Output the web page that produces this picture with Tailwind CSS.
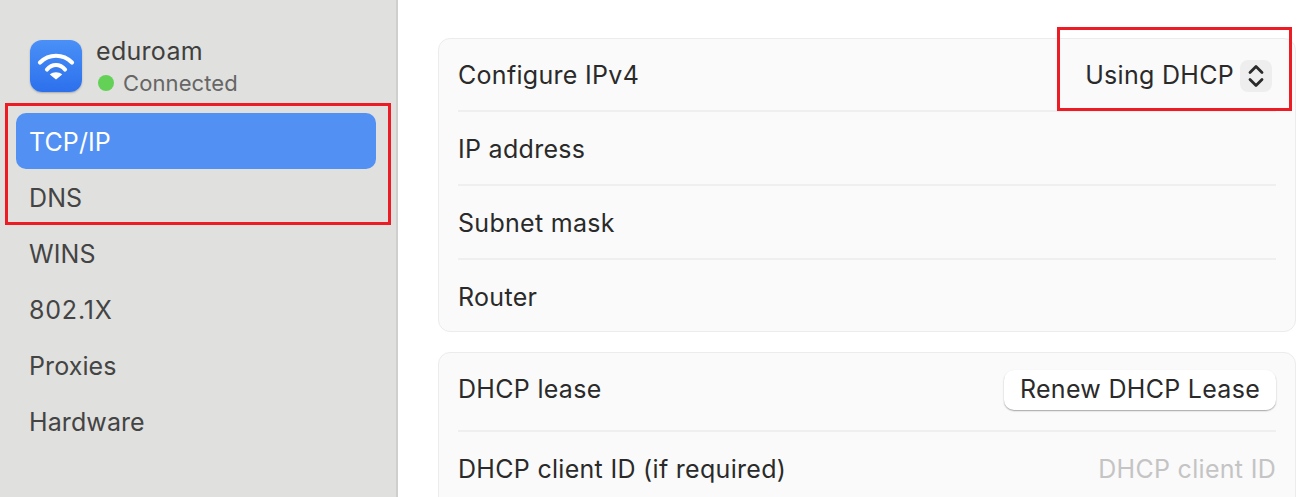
<!DOCTYPE html>
<html lang="en">
<head>
    <meta charset="UTF-8">
    <title>eduroam TCP/IP</title>
    <script src="https://cdn.jsdelivr.net/npm/@tailwindcss/browser@4"></script>
</head>
<body class="relative h-[497px] w-[1312px] overflow-hidden bg-white font-['Inter','Liberation_Sans',sans-serif] text-[25px] tracking-[0.3px] text-[#2a2a2a]">

    <div class="flex h-full">
        <!-- sidebar -->
        <aside class="h-full w-[398px] shrink-0 border-r-2 border-[#cfcfcd] bg-[#e0e0de] pl-4 pr-5 pt-10 text-[#444444]">
            <div class="flex h-[73px] items-start gap-3.5 pl-3.5">
                <div class="flex h-[52px] w-[52px] items-center justify-center rounded-xl bg-gradient-to-b from-[#4a90f7] to-[#2c70ec] shadow-[0_1px_2px_rgba(0,0,0,0.25)]">
                    <svg width="38" height="30" viewBox="0 0 38 30" fill="none" stroke="white" stroke-width="4.2" stroke-linecap="round">
                        <path d="M3 11.5 C12 2.5 26 2.5 35 11.5"/>
                        <path d="M10 18.5 C15 12.5 23 12.5 28 18.5"/>
                        <path d="M19 28.5 L12.8 23.5 C16 20.5 22 20.5 25.2 23.5 Z" fill="white" stroke="none"/>
                    </svg>
                </div>
                <div class="flex flex-col">
                    <span class="-mt-1 text-[25px] leading-[30px] text-[#3f3f3f]">eduroam</span>
                    <span class="mt-0.5 flex items-center gap-[9px] pl-0.5 text-[22px] leading-[30px] tracking-[0.1px] text-[#666666]">
                        <span class="h-4 w-4 rounded-full bg-[#62d156]"></span>Connected
                    </span>
                </div>
            </div>
            <nav class="flex flex-col tracking-[0.1px]">
                <a class="flex h-14 items-center rounded-[10px] bg-[#5390f3] px-[13px] pt-1 text-white">TCP/IP</a>
                <a class="flex h-14 items-center px-[13px] pt-1">DNS</a>
                <a class="flex h-14 items-center px-[13px] pt-1">WINS</a>
                <a class="flex h-14 items-center px-[13px] pt-1 tracking-[0.8px]">802.1X</a>
                <a class="flex h-14 items-center px-[13px] pt-1">Proxies</a>
                <a class="flex h-14 items-center px-[13px] pt-1">Hardware</a>
            </nav>
        </aside>

        <!-- settings -->
        <main class="flex flex-1 flex-col gap-5 pt-[38px] pl-10 pr-4">
            <section class="rounded-xl border border-[#ececec] bg-[#fafafa] px-[19px]">
                <div class="flex h-[73px] items-center justify-between border-b-2 border-[#efefef] pt-0.5">
                    <span>Configure IPv4</span>
                    <span class="flex items-center gap-[6px] pr-1">
                        Using DHCP
                        <span class="flex h-8 w-8 items-center justify-center rounded-lg bg-[#eeeeee]">
                            <svg width="16" height="24" viewBox="0 0 16 24" fill="none" stroke="#2a2a2a" stroke-width="2.8" stroke-linecap="round" stroke-linejoin="round">
                                <path d="M2 8.5 L8 2.5 L14 8.5"/>
                                <path d="M2 15.5 L8 21.5 L14 15.5"/>
                            </svg>
                        </span>
                    </span>
                </div>
                <div class="flex h-[74px] items-center border-b-2 border-[#efefef] pt-1">IP address</div>
                <div class="flex h-[74px] items-center border-b-2 border-[#efefef] pt-1">Subnet mask</div>
                <div class="flex h-[71px] items-center pt-1">Router</div>
            </section>

            <section class="h-[160px] rounded-xl border border-[#ececec] bg-[#fafafa] px-[19px]">
                <div class="flex h-[79px] items-center justify-between border-b-2 border-[#efefef] pb-1">
                    <span>DHCP lease</span>
                    <button class="flex h-10 w-[272px] items-center justify-center rounded-[10px] bg-white shadow-[0_1px_1.5px_rgba(0,0,0,0.35)]">Renew DHCP Lease</button>
                </div>
                <div class="flex h-[76px] items-center justify-between">
                    <span>DHCP client ID (if required)</span>
                    <span class="text-[#c4c4c4]">DHCP client ID</span>
                </div>
            </section>
        </main>
    </div>

    <!-- annotation boxes -->
    <div class="absolute left-[5px] top-[103px] h-[122px] w-[386px] border-[3px] border-[#ed1c24]"></div>
    <div class="absolute left-[1057px] top-[27px] h-[84px] w-[235px] border-[3px] border-[#ed1c24]"></div>
</body>
</html>
